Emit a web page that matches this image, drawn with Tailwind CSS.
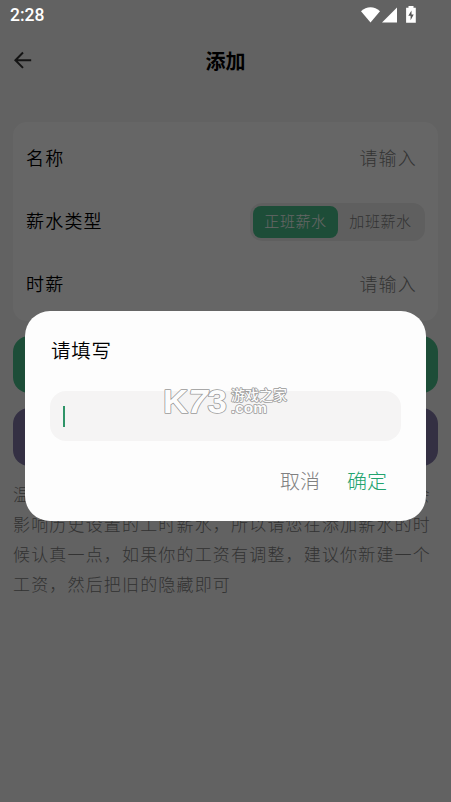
<!DOCTYPE html>
<html lang="zh-CN">
<head>
    <meta charset="UTF-8">
    <meta name="viewport" content="width=device-width, initial-scale=1.0">
    <title>添加</title>
    <script src="https://cdn.jsdelivr.net/npm/@tailwindcss/browser@4"></script>
</head>
<body class="bg-[#f5f5f5] font-['Noto_Sans_CJK_SC',sans-serif] text-black">
    <div class="relative h-[802px] w-[451px] overflow-hidden">
        <!-- App bar -->
        <header class="mt-[30px] grid h-[62px] grid-cols-[1fr_auto_1fr] items-center px-[13px]">
            <svg class="h-5 w-5" viewBox="0 0 20 20" fill="none" stroke="#333" stroke-width="2">
                <path d="M18.2 9.2H3M10 1.5L2.4 9.2l7.6 7.7" />
            </svg>
            <h1 class="text-[20px] font-bold">添加</h1>
        </header>

        <main class="px-[13px] pt-[30px]">
            <!-- Form -->
            <section class="rounded-[14px] bg-white px-[13px] pt-[4px] pb-[6px] text-[18px] tracking-[1.2px]">
                <div class="flex h-[63px] items-center justify-between">
                    <span class="font-[350]">名称</span>
                    <span class="mr-[8px] font-light text-[#808080]">请输入</span>
                </div>
                <div class="flex h-[63px] items-center justify-between">
                    <span class="font-[350]">薪水类型</span>
                    <div class="mt-[2px] flex h-[38px] w-[175px] rounded-[12px] bg-[#eee] p-[3px] pr-[2px] text-[15px] font-light tracking-[0.6px]">
                        <span class="flex w-[85px] items-center justify-center rounded-[8px] bg-[#4ac08c] text-white">正班薪水</span>
                        <span class="flex flex-1 items-center justify-center text-[#808080]">加班薪水</span>
                    </div>
                </div>
                <div class="flex h-[63px] items-center justify-between">
                    <span class="font-[350]">时薪</span>
                    <span class="mr-[8px] font-light text-[#808080]">请输入</span>
                </div>
            </section>

            <button class="mt-[15px] block h-[57px] w-full rounded-[16px] bg-[#4ac08c]"></button>
            <button class="mt-[15px] block h-[58px] w-full rounded-[16px] bg-[#8278a8]"></button>

            <p class="mt-[13px] -mr-[6px] text-[17px] leading-[30px] font-light tracking-[1.17px] text-[#808080]">温馨提示：薪水设置添加成功以后不能修改，否则会<br>影响历史设置的工时薪水，所以请您在添加薪水的时<br>候认真一点，如果你的工资有调整，建议你新建一个<br>工资，然后把旧的隐藏即可</p>
        </main>

        <!-- Dialog -->
        <div class="absolute inset-0 bg-black/60 px-[25px] pt-[311px]">
            <div class="flex h-[210px] flex-col rounded-[25px] bg-[#fdfdfd] px-[25px] pt-[24px]">
                <h2 class="pl-px text-[19.5px] leading-[30px] font-[350] tracking-[0.8px]">请填写</h2>
                <div class="mt-[26px] flex h-[50px] items-center rounded-[16px] bg-[#f5f4f4] pl-[13px]">
                    <span class="h-[21px] w-[2px] bg-[#2f9468]"></span>
                </div>
                <div class="mt-[25px] flex justify-end gap-[27px] pr-[14px] text-[20px] leading-[30px] font-light">
                    <button class="text-[#808080]">取消</button>
                    <button class="text-[#22a36e]">确定</button>
                </div>
            </div>
        </div>

        <!-- Watermark -->
        <svg class="absolute top-[384px] left-[160px] h-[36px] w-[132px]" viewBox="0 0 132 36" fill="#fcfcfc" stroke="#999" stroke-width="1.5" stroke-linejoin="round" paint-order="stroke">
            <g font-family="Liberation Sans" font-weight="bold">
                <text x="3" y="28.5" font-size="33" textLength="64" lengthAdjust="spacingAndGlyphs">K<tspan font-style="italic">7</tspan>3</text>
                <text x="71" y="29" font-size="15" textLength="36" lengthAdjust="spacingAndGlyphs">.com</text>
            </g>
            <text x="71" y="16" font-family="Noto Sans CJK SC" font-weight="500" font-size="14" textLength="56">游戏之家</text>
        </svg>

        <!-- Status bar -->
        <div class="absolute inset-x-0 top-0 flex h-[30px] items-center justify-between pr-[34px] pl-[10px] text-white">
            <span class="pt-px font-[Roboto] text-[17.5px] font-medium">2:28</span>
            <svg class="h-[18px] w-[56px]" viewBox="0 0 56 18" fill="#fff">
                <path d="M0 5.2C5.5-.2 13.5-.2 19 5.2L9.5 16.6z" />
                <path d="M36 1.5v15H21z" />
                <path d="M47.5 0h5v1.7h2.3v15h-9.7v-15h2.4z" />
                <path d="M50.5 4.4l-3.2 5.4h2.3v4.4l3.1-5.7h-2.2z" fill="#555" />
            </svg>
        </div>
    </div>
</body>
</html>
